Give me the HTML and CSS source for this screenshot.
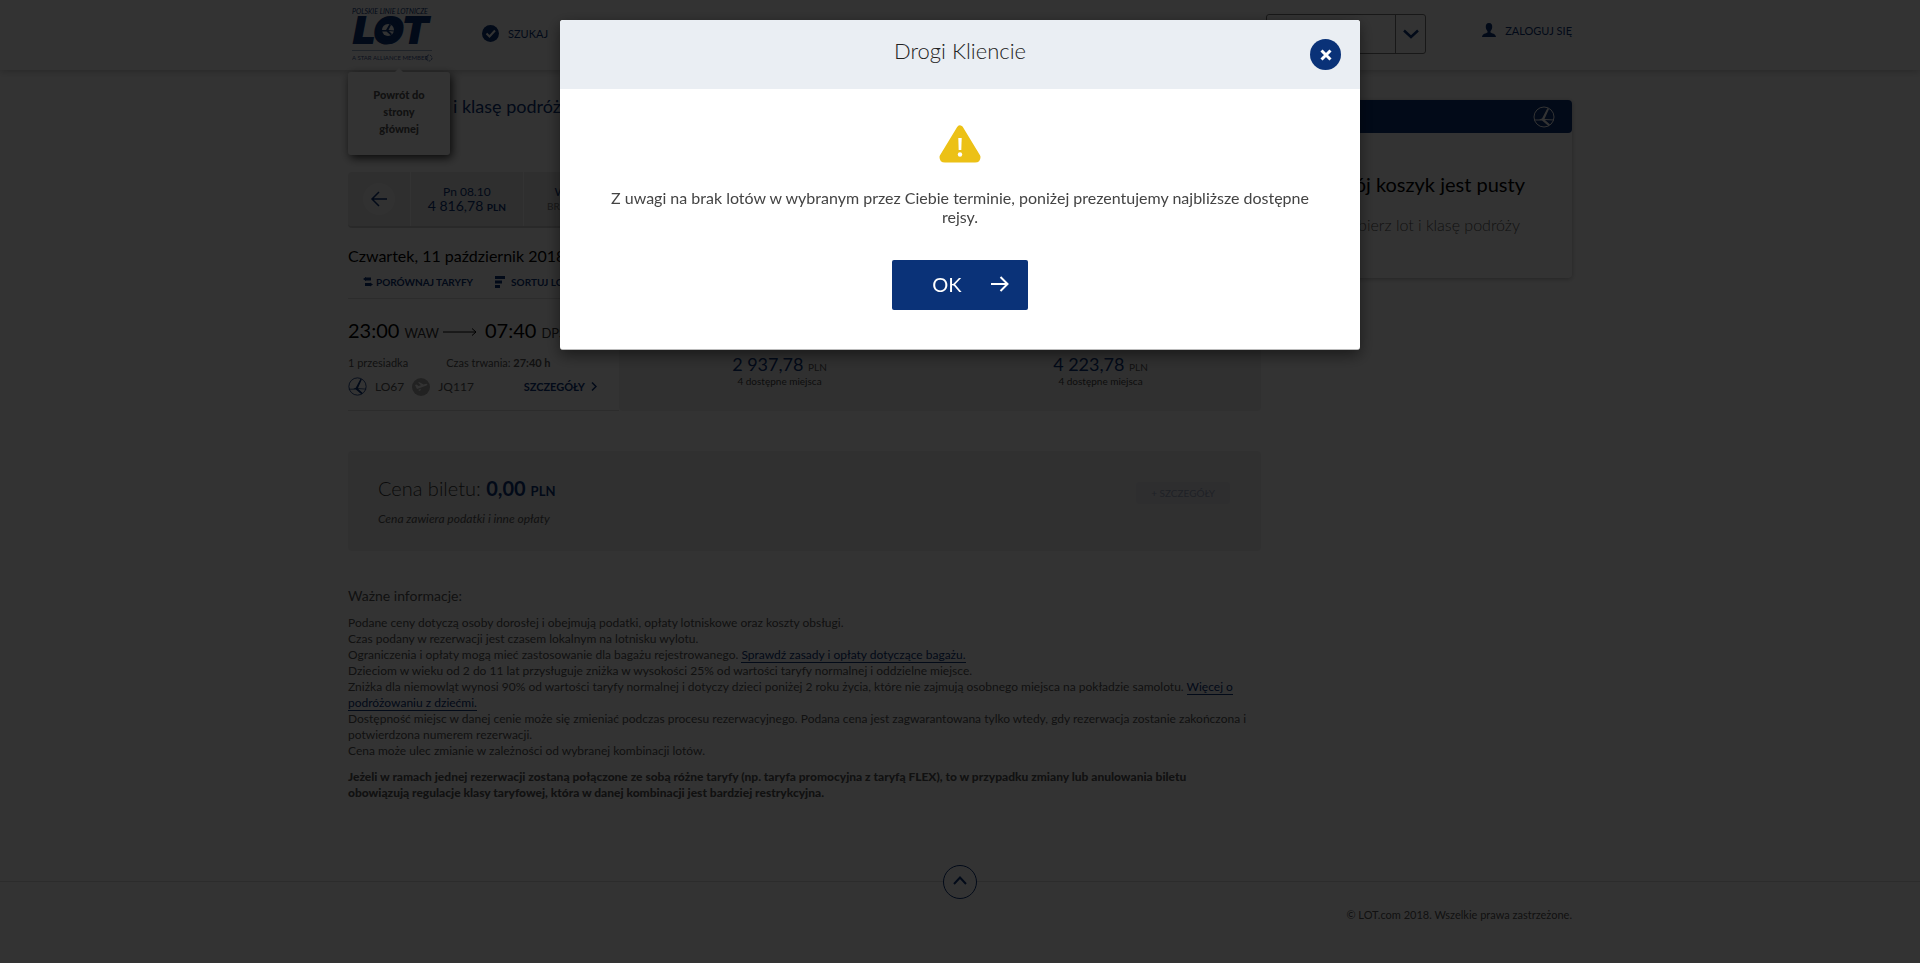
FILE: index.html
```html
<!DOCTYPE html>
<html lang="pl">
<head>
<meta charset="utf-8">
<title>LOT – wybierz lot i klasę podróży</title>
<link rel="stylesheet" href="styles.css">
</head>
<body>
<svg class="sprite" aria-hidden="true">
  <symbol id="crane" viewBox="0 0 22 22">
    <circle cx="11" cy="11" r="10" fill="none" stroke="currentColor" stroke-width="1"/>
    <path d="M1 13.500 H6 L9 12.500 L14.500 2 L16 3 L11.500 13 L21 13.500 V14.500 L12 14 L17 18.500 L15.500 20 L9 14.500 L6 14.500 H1 Z" fill="currentColor"/>
  </symbol>
</svg>

<header class="site-header">
  <div class="container header-row">
    <div class="brand">
      <a class="logo" href="#" aria-label="Polskie Linie Lotnicze LOT">
        <svg width="84" height="54" viewBox="0 0 84 54" fill="currentColor">
          <text class="logo-top" x="0" y="6">POLSKIE LINIE LOTNICZE</text>
          <text class="logo-main" x="1" y="35">LOT</text>
          <ellipse cx="36" cy="22" rx="12" ry="11"/>
          <circle cx="36" cy="22" r="6" fill="#fff"/>
          <path d="M30 22 H34 L37.500 16 L39 17 L36.500 22 L42 22.500 V23.500 L37 23 L40 26 L39 27.500 L34.500 23.500 H30 Z"/>
          <path d="M0 42 H80 V43 H0 Z" opacity=".4"/>
          <text class="logo-sub" x="0" y="52">A STAR ALLIANCE MEMBER</text>
          <circle cx="77" cy="50" r="3" fill="none" stroke="currentColor" stroke-dasharray="2 1" opacity=".7"/>
        </svg>
      </a>
      <div class="tooltip" role="tooltip">Powrót do strony głównej</div>
    </div>
    <nav class="main-nav">
      <a class="nav-link" href="#">
        <svg width="17" height="17" viewBox="0 0 17 17"><circle cx="8.500" cy="8.500" r="8.500" fill="currentColor"/><path d="M4.500 8.500 L7.500 11.500 L13 5.500" fill="none" stroke="#fff" stroke-width="2"/></svg>
        SZUKAJ
      </a>
    </nav>
    <div class="header-tools">
      <div class="picker">
        <select class="picker-select" aria-label="Kraj i język"><option>Polska</option></select>
        <span class="picker-arrow"><svg width="16" height="10" viewBox="0 0 16 10"><path d="M1 1.500 L8 8 L15 1.500" fill="none" stroke="currentColor" stroke-width="2.500"/></svg></span>
      </div>
      <a class="nav-link" href="#">
        <svg width="14" height="14" viewBox="0 0 14 14" fill="currentColor"><path d="M7 0 C9.500 0 10.500 2 10.200 4.500 C10 6.500 9 7.500 8.500 8.200 V9.500 C10 10.500 13.500 10.500 14 14 H0 C.5 10.500 4 10.500 5.500 9.500 V8.200 C5 7.500 4 6.500 3.800 4.500 C3.500 2 4.500 0 7 0 Z"/></svg>
        ZALOGUJ SIĘ
      </a>
    </div>
  </div>
</header>

<main class="container layout">
  <section class="results">
    <h1 class="page-title">Wybierz loty i klasę podróży</h1>

    <div class="calendar">
      <div class="cal-nav"><button class="round-btn" aria-label="Poprzednie dni"><svg width="18" height="16" viewBox="0 0 18 16"><path d="M9 1 L2 8 L9 15 M2 8 H17" fill="none" stroke="currentColor" stroke-width="1.500"/></svg></button></div>
      <button class="cal-day"><span class="cal-date">Pn 08.10</span><span class="cal-price">4 816,78 <small>PLN</small></span></button>
      <button class="cal-day"><span class="cal-date">Wt 09.10</span><span class="cal-none">BRAK LOTÓW</span></button>
      <button class="cal-day" aria-label="Śr 10.10"></button>
      <button class="cal-day" aria-label="Cz 11.10"></button>
      <button class="cal-day" aria-label="Pt 12.10"></button>
      <button class="cal-day" aria-label="So 13.10"></button>
      <button class="cal-day" aria-label="Nd 14.10"></button>
      <div class="cal-nav"></div>
    </div>

    <h2 class="day-title">Czwartek, 11 październik 2018</h2>
    <div class="actions">
      <button class="action"><svg width="10" height="10" viewBox="0 0 10 10"><path d="M2 2 H8 M2 7.500 H8" stroke="currentColor" stroke-width="3"/><path d="M0 2 L3 0 V4 Z M10 7.500 L7 5.500 V9.500 Z" fill="currentColor"/></svg>PORÓWNAJ TARYFY</button>
      <button class="action"><svg width="11" height="12" viewBox="0 0 11 12"><path d="M0 1.500 H10 M0 6 H7 M0 10.500 H5" stroke="currentColor" stroke-width="3"/></svg>SORTUJ LOTY</button>
    </div>

    <article class="flight">
      <div class="flight-info">
        <div class="times">
          <span class="stop"><span class="time">23:00</span> WAW</span>
          <svg width="34" height="8" viewBox="0 0 34 8"><path d="M0 4 H33 M29 .5 L33 4 L29 7.500" fill="none" stroke="currentColor"/></svg>
          <span class="stop"><span class="time">07:40</span> DPS</span>
        </div>
        <div class="details"><span class="stops">1 przesiadka</span><span>Czas trwania: <b>27:40 h</b></span></div>
        <div class="carriers">
          <svg class="blue" width="19" height="19"><use href="#crane"/></svg><span>LO67</span>
          <svg width="18" height="18" viewBox="0 0 18 18"><circle cx="9" cy="9" r="9" fill="#aaa"/><path d="M3 7 L4.500 6.500 L6.500 8 L9 7.200 L6 4.500 L7.500 4.200 L11.500 6.600 L14.500 5.800 L15.500 6.500 L14.500 7.600 L5 11 Z M6 12 L9 10.800 L8 13 Z" fill="#fff"/></svg><span>JQ117</span>
          <a class="more" href="#">SZCZEGÓŁY <svg width="6" height="9" viewBox="0 0 6 9"><path d="M1 .5 L5 4.500 L1 8.500" fill="none" stroke="currentColor" stroke-width="1.500"/></svg></a>
        </div>
      </div>
      <div class="fares">
        <button class="fare"><span class="fare-price">2 937,78 <small>PLN</small></span><span class="seats">4 dostępne miejsca</span></button>
        <button class="fare"><span class="fare-price">4 223,78 <small>PLN</small></span><span class="seats">4 dostępne miejsca</span></button>
      </div>
    </article>

    <div class="ticket">
      <div>
        <p class="ticket-price">Cena biletu: <b>0,00 <small>PLN</small></b></p>
        <p class="ticket-note">Cena zawiera podatki i inne opłaty</p>
      </div>
      <button class="ticket-more" disabled>+ SZCZEGÓŁY</button>
    </div>

    <section class="info">
      <h3 class="info-title">Ważne informacje:</h3>
      <p>Podane ceny dotyczą osoby dorosłej i obejmują podatki, opłaty lotniskowe oraz koszty obsługi.<br>
      Czas podany w rezerwacji jest czasem lokalnym na lotnisku wylotu.<br>
      Ograniczenia i opłaty mogą mieć zastosowanie dla bagażu rejestrowanego. <a href="#">Sprawdź zasady i opłaty dotyczące bagażu.</a><br>
      Dzieciom w wieku od 2 do 11 lat przysługuje zniżka w wysokości 25% od wartości taryfy normalnej i oddzielne miejsce.<br>
      Zniżka dla niemowląt wynosi 90% od wartości taryfy normalnej i dotyczy dzieci poniżej 2 roku życia, które nie zajmują osobnego miejsca na pokładzie samolotu. <a href="#">Więcej o podróżowaniu z dziećmi.</a><br>
      Dostępność miejsc w danej cenie może się zmieniać podczas procesu rezerwacyjnego. Podana cena jest zagwarantowana tylko wtedy, gdy rezerwacja zostanie zakończona i potwierdzona numerem rezerwacji.<br>
      Cena może ulec zmianie w zależności od wybranej kombinacji lotów.</p>
      <p class="info-strong">Jeżeli w ramach jednej rezerwacji zostaną połączone ze sobą różne taryfy (np. taryfa promocyjna z taryfą FLEX), to w przypadku zmiany lub anulowania biletu obowiązują regulacje klasy taryfowej, która w danej kombinacji jest bardziej restrykcyjna.</p>
    </section>
  </section>

  <aside class="basket">
    <div class="basket-head"><svg width="22" height="22"><use href="#crane"/></svg></div>
    <p class="basket-title">Twój koszyk jest pusty</p>
    <p class="basket-text">Wybierz lot i klasę podróży</p>
  </aside>
</main>

<footer class="site-footer">
  <a class="to-top" href="#" aria-label="Do góry"><svg width="14" height="9" viewBox="0 0 14 9"><path d="M1 8 L7 1.500 L13 8" fill="none" stroke="currentColor" stroke-width="2"/></svg></a>
  <div class="container copyright">© LOT.com 2018. Wszelkie prawa zastrzeżone.</div>
</footer>

<div class="overlay">
  <div class="modal" role="dialog" aria-modal="true" aria-labelledby="modal-title">
    <div class="modal-head">
      <h2 class="modal-title" id="modal-title">Drogi Kliencie</h2>
      <button class="modal-close" aria-label="Zamknij"><svg width="12" height="12" viewBox="0 0 12 12"><path d="M1.500 1.500 L10.500 10.500 M10.500 1.500 L1.500 10.500" stroke="currentColor" stroke-width="3"/></svg></button>
    </div>
    <div class="modal-body">
      <svg width="42" height="38" viewBox="0 0 42 38"><path d="M21 4 L38 32 Q38 34 36 34 H6 Q4 34 4 32 Z" fill="#ecc116" stroke="#ecc116" stroke-width="7" stroke-linejoin="round"/><path d="M19.300 13 H22.700 L22.300 25 H19.700 Z" fill="#fff"/><circle cx="21" cy="29.500" r="2.200" fill="#fff"/></svg>
      <p class="modal-text">Z uwagi na brak lotów w wybranym przez Ciebie terminie, poniżej prezentujemy najbliższe dostępne rejsy.</p>
      <button class="ok-btn">OK<svg width="18" height="16" viewBox="0 0 18 16"><path d="M0 8 H16 M9.500 1 L16.500 8 L9.500 15" fill="none" stroke="currentColor" stroke-width="2"/></svg></button>
    </div>
  </div>
</div>
</body>
</html>
```

FILE: styles.css
```css
* { box-sizing: border-box; }

body {
  margin: 0;
  min-height: 100vh;
  background: #fff;
  color: #555;
  font-family: Lato, "Open Sans", sans-serif;
  font-size: 12px;
  line-height: 16px;
}

h1, h2, h3, p { margin: 0; font-weight: 400; }
a { color: #0a3278; text-decoration: none; }
button { margin: 0; padding: 0; border: 0; background: none; color: #0a3278; font: inherit; }
svg { flex: none; }
.sprite { position: absolute; width: 0; height: 0; }
.blue { color: #0a3278; }
.container { width: 100%; max-width: 1224px; margin: 0 auto; }

/* header */
.site-header { height: 70px; box-shadow: 0 1px 8px rgba(0, 0, 0, .25); }
.header-row { display: flex; align-items: flex-start; }
.brand { position: relative; padding: 8px 0 0 4px; }
.logo svg { display: block; }
.logo-top { font: italic 400 7px Lato, sans-serif; }
.logo-main { font: italic 700 35px "DejaVu Sans", sans-serif; stroke: currentColor; stroke-width: 2px; }
.logo-sub { font: 400 6px Lato, sans-serif; opacity: .8; }
.tooltip {
  position: absolute;
  top: 72px;
  left: 0;
  width: 102px;
  padding: 14px 20px 18px;
  border-radius: 3px;
  background: #fff;
  box-shadow: 2px 3px 10px rgba(0, 0, 0, .8);
  color: #555;
  font-size: 11px;
  font-weight: 900;
  line-height: 17px;
  text-align: center;
}
.tooltip::before {
  content: "";
  position: absolute;
  top: -4px;
  left: 47px;
  border: 4px solid transparent;
  border-top: 0;
  border-bottom-color: #fff;
}
.main-nav { margin-left: 46px; padding-top: 25px; }
.nav-link { display: flex; align-items: center; gap: 9px; font-size: 11px; line-height: 17px; }
.header-tools { display: flex; align-items: center; gap: 56px; margin-left: auto; padding-top: 14px; }
.header-tools .nav-link { height: 32px; align-self: flex-start; }
.picker { position: relative; width: 160px; height: 40px; }
.picker-select { width: 100%; height: 100%; padding: 0 12px; border: 1px solid #777; border-radius: 3px; background: #fff; font: inherit; appearance: none; }
.picker-arrow { position: absolute; top: 0; right: 0; display: flex; align-items: center; justify-content: center; width: 31px; height: 100%; border-left: 1px solid #777; color: #0a3278; pointer-events: none; }

/* results */
.layout { display: grid; grid-template-columns: minmax(0, 1fr) 290px; gap: 21px; align-items: start; }
.page-title { margin: 21px 0 51px; color: #0a3278; font-size: 18px; line-height: 30px; }
.calendar { display: flex; height: 56px; border-bottom: 2px solid #ccc; border-radius: 4px; background: #e9e9e9; overflow: hidden; }
.cal-nav { display: flex; align-items: center; justify-content: center; width: 62px; }
.round-btn { display: flex; align-items: center; justify-content: center; width: 32px; height: 32px; border-radius: 50%; background: #f5f5f5; }
.cal-day { display: flex; flex: 1; flex-direction: column; align-items: center; justify-content: center; border-left: 1px solid #fff; line-height: 14px; }
.cal-date { font-size: 12px; }
.cal-price { font-size: 14px; }
.cal-price small { font-size: 10px; font-weight: 700; }
.cal-none { font-size: 10px; color: #777; }
.day-title { margin-top: 16px; color: #000; font-size: 16px; line-height: 24px; }
.actions { display: flex; gap: 22px; padding: 4px 0 6px 15px; }
.action { display: flex; align-items: center; gap: 3px; font-size: 10px; font-weight: 700; line-height: 20px; }
.action + .action { gap: 5px; }

.flight { display: grid; grid-template-columns: 271px 1fr; height: 113px; border-top: 1px solid #ddd; }
.flight-info { padding-top: 19px; border-bottom: 1px solid #ddd; }
.times { display: flex; align-items: center; gap: 4px; color: #000; line-height: 24px; white-space: nowrap; }
.stop { display: flex; align-items: baseline; gap: 5px; color: #333; font-size: 13px; }
.time { color: #000; font-size: 20px; }
.times svg + .stop { padding-left: 4px; }
.details { display: flex; gap: 38px; margin-top: 10px; font-size: 11px; }
.carriers { display: flex; align-items: center; gap: 8px; margin-top: 6px; font-size: 12px; line-height: 18px; }
.more { display: flex; align-items: center; gap: 6px; margin: 0 22px 0 auto; font-size: 11px; font-weight: 700; }
.fares { display: grid; grid-template-columns: 1fr 1fr; border-radius: 4px; background: #f0f0f0; }
.fare { display: flex; flex-direction: column; align-items: center; justify-content: flex-end; padding-bottom: 24px; line-height: 12px; }
.fare-price { font-size: 18px; line-height: 16px; }
.fare-price small { color: #555; font-size: 10px; }
.seats { color: #444; font-size: 10px; }

.ticket { display: flex; align-items: flex-start; justify-content: space-between; margin-top: 40px; padding: 25px 31px 24px 30px; border-radius: 4px; background: #f0f0f0; }
.ticket-price { font-size: 20px; font-weight: 300; line-height: 24px; color: #333; }
.ticket-price b { color: #0a3278; font-weight: 700; }
.ticket-price small { font-size: 13px; }
.ticket-note { margin-top: 8px; font-size: 12px; font-style: italic; }
.ticket-more { margin-top: 6px; padding: 0 15px; border-radius: 3px; background: #e6e6ec; color: #9aa5bd; font-size: 10px; line-height: 22px; }

.info { margin-top: 35px; }
.info-title { margin-bottom: 9px; font-size: 14px; line-height: 20px; }
.info a { border-bottom: 1px solid #0a3278; }
.info .info-strong { margin-top: 10px; padding-right: 40px; font-weight: 900; }

/* basket */
.basket { margin-top: 30px; padding-bottom: 41px; border-radius: 4px; box-shadow: 0 1px 5px rgba(0, 0, 0, .3); text-align: center; }
.basket-head { display: flex; align-items: center; justify-content: flex-end; height: 33px; padding-right: 17px; border-radius: 4px; background: #0a3278; color: #fff; }
.basket-title { margin-top: 39px; color: #000; font-size: 20px; line-height: 24px; }
.basket-text { margin-top: 17px; font-size: 16px; font-weight: 300; line-height: 24px; }

/* footer */
.site-footer { position: relative; margin-top: 80px; border-top: 1px solid #ddd; }
.to-top { position: absolute; top: -17px; left: calc(50% - 17px); display: flex; align-items: center; justify-content: center; width: 34px; height: 34px; padding-bottom: 4px; border: 1px solid #0a3278; border-radius: 50%; background: #fff; }
.copyright { padding: 25px 0 0; font-size: 11px; text-align: right; }

/* dialog */
.overlay { position: fixed; inset: 0; padding: 20px; background: rgba(0, 0, 0, .8); }
.modal { max-width: 800px; margin: 0 auto; border-bottom: 1px solid #bbb; border-radius: 3px; background: #fff; box-shadow: 0 5px 15px rgba(0, 0, 0, .5); overflow: hidden; }
.modal-head { position: relative; height: 69px; padding-top: 17px; background: #eaeef3; }
.modal-title { color: #222; font-size: 22px; font-weight: 300; line-height: 28px; text-align: center; }
.modal-close { position: absolute; top: 19px; right: 19px; display: flex; align-items: center; justify-content: center; width: 31px; height: 31px; border-radius: 50%; background: #0a3278; color: #fff; }
.modal-body { display: flex; flex-direction: column; align-items: center; padding: 36px 40px 39px; }
.modal-text { margin-top: 25px; color: #444; font-size: 16px; line-height: 19px; text-align: center; }
.ok-btn { display: flex; align-items: center; justify-content: center; gap: 29px; width: 136px; height: 50px; margin-top: 34px; padding: 0 0 3px 21px; border-radius: 2px; background: #0a3278; color: #fff; font-size: 20px; }
```
